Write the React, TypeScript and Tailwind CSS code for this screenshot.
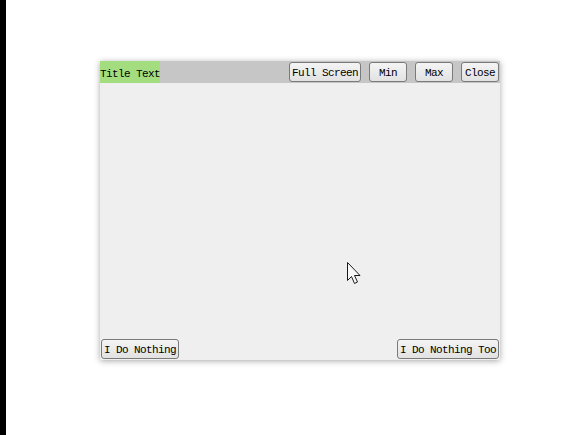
import React from "react";

const font = {
  fontFamily: '"Liberation Mono", "DejaVu Sans Mono", monospace',
  letterSpacing: "-0.6px",
};

function Btn({ children }: { children: React.ReactNode }) {
  return (
    <button
      className="h-[20px] min-w-[38px] px-[2px] pt-[2px] border border-[#7a7a7a] rounded-[3px] bg-gradient-to-b from-[#f4f4f4] to-[#e2e2e2] text-[11px] leading-[16px] text-black flex items-center justify-center whitespace-nowrap"
      style={font}
    >
      {children}
    </button>
  );
}

export default function App() {
  return (
    <div className="w-[583px] h-[435px] bg-white flex overflow-hidden relative">
      <div className="w-[6px] h-full bg-black shrink-0" />
      <div className="pl-[94px] pt-[61px]">
        <div className="w-[400px] h-[299px] bg-[#efefef] flex flex-col shadow-[0_1px_6px_rgba(0,0,0,0.35)]">
          <div className="h-[22px] bg-[#c6c6c6] flex items-start">
            <div
              className="h-[22px] w-[60px] bg-[#a3dd7f] text-[11px] pt-[4px] leading-[18px] text-black whitespace-nowrap"
              style={font}
            >
              Title Text
            </div>
            <div className="flex-1" />
            <div className="flex gap-[8px] pt-[1px] pr-[1px]">
              <Btn>Full Screen</Btn>
              <Btn>Min</Btn>
              <Btn>Max</Btn>
              <Btn>Close</Btn>
            </div>
          </div>
          <div className="flex-1" />
          <div className="flex justify-between px-[1px] pb-[1px]">
            <Btn>I Do Nothing</Btn>
            <Btn>I Do Nothing Too</Btn>
          </div>
        </div>
      </div>
      <svg
        className="absolute left-[347px] top-[262px]"
        width="17"
        height="25"
        viewBox="0 0 17 25"
      >
        <path
          d="M0.5 0.5 L0.5 18.5 L4.5 14.5 L7.5 21.5 L10.5 20 L7.5 13.5 L13 13.5 Z"
          fill="#f8f8f8"
          stroke="#1a1a1a"
          strokeWidth="1"
          strokeLinejoin="miter"
        />
      </svg>
    </div>
  );
}
